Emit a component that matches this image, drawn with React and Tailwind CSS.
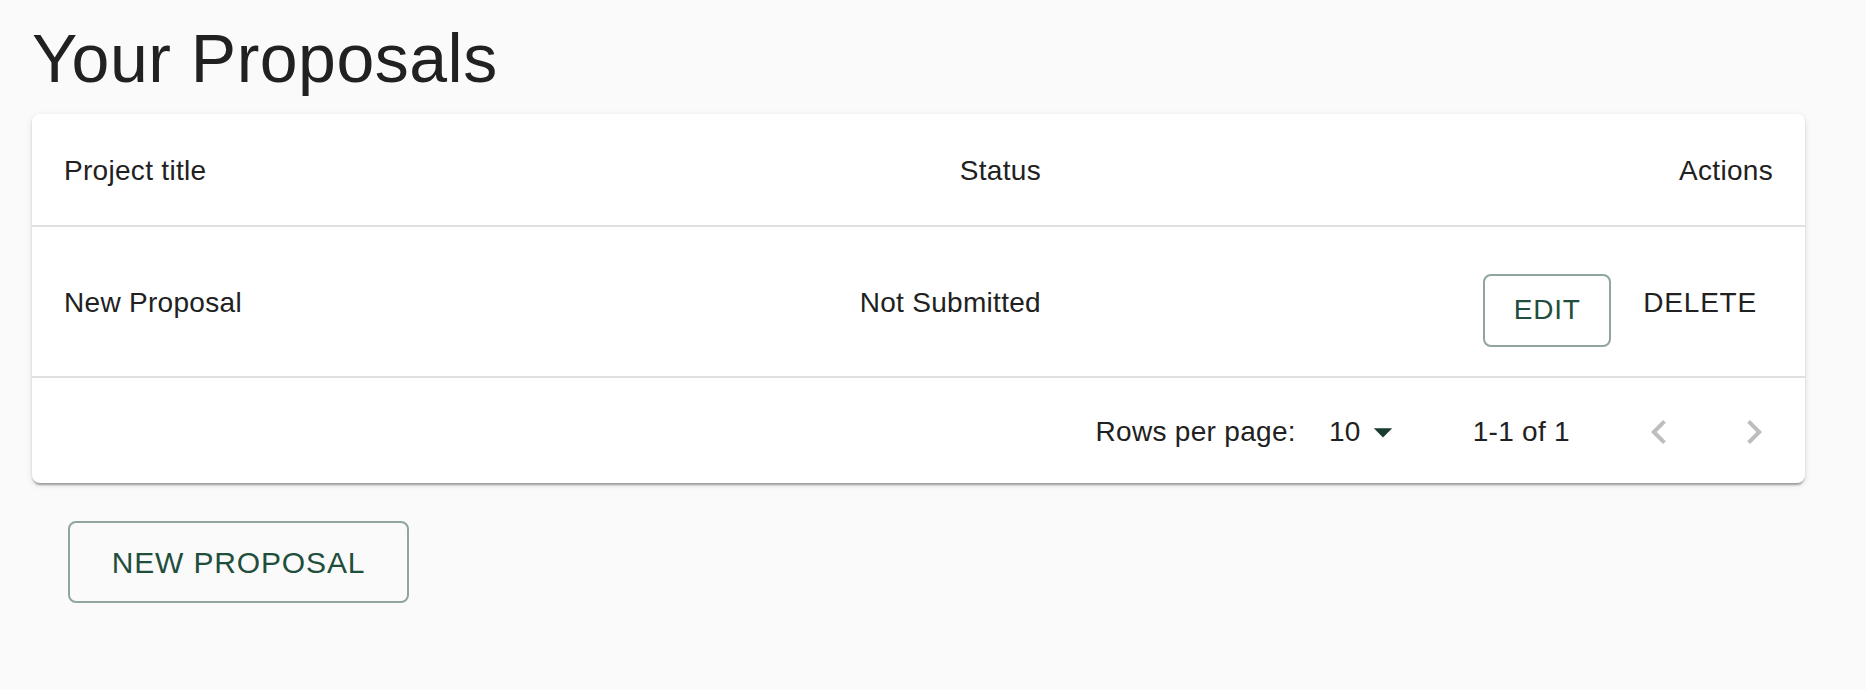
import React from "react";

const ChevronLeft = () => (
  <svg viewBox="0 0 24 24" className="w-12 h-12 fill-[#bdbdbd]">
    <path d="M15.41 16.59 10.83 12l4.58-4.59L14 6l-6 6 6 6z" />
  </svg>
);

const ChevronRight = () => (
  <svg viewBox="0 0 24 24" className="w-12 h-12 fill-[#bdbdbd]">
    <path d="M8.59 16.59 13.17 12 8.59 7.41 10 6l6 6-6 6z" />
  </svg>
);

const App = () => {
  return (
    <div className="min-h-screen w-full bg-[#fafafa] text-[#212121] font-['Liberation_Sans',Arial,sans-serif]">
      <div className="pl-8 pr-[61px] pt-4">
        <h1 className="text-[68px] leading-[84px] tracking-[0.5px] font-normal">
          Your Proposals
        </h1>

        {/* proposals table */}
        <div className="mt-[14px] bg-white rounded-lg overflow-hidden shadow-[0_4px_2px_-2px_rgba(0,0,0,0.2),0_2px_2px_0_rgba(0,0,0,0.14),0_2px_6px_0_rgba(0,0,0,0.12)]">
          <div className="flex items-center h-[113px] pt-[3px] border-b-2 border-[#e0e0e0] text-[28px] tracking-[0.3px]">
            <div className="w-[650px] pl-8">Project title</div>
            <div className="w-[359px] text-right">Status</div>
            <div className="flex-1 text-right pr-8">Actions</div>
          </div>

          <div className="flex items-center h-[151px] pt-[3px] border-b-2 border-[#e0e0e0] text-[28px] tracking-[0.3px]">
            <div className="w-[650px] pl-8">New Proposal</div>
            <div className="w-[359px] text-right">Not Submitted</div>
            <div className="flex-1 flex items-center justify-end pr-8">
              <button className="mt-[14px] w-[128px] h-[73px] flex items-center justify-center border-2 border-[#8fa69e] rounded-lg text-[28px] tracking-[0.8px] text-[#1f4e3d]">
                EDIT
              </button>
              <button className="ml-4 px-4 py-3 text-[28px] tracking-[0.8px] text-[#212121]">
                DELETE
              </button>
            </div>
          </div>

          <div className="flex items-center justify-end h-[105px] pt-[3px] pr-[11px] text-[28px] tracking-[0.3px]">
            <span>Rows per page:</span>
            <div className="ml-[33px] flex items-center">
              <span>10</span>
              <svg viewBox="0 0 24 24" className="w-11 h-11 fill-[#1a3b2e]">
                <path d="M7 10l5 5 5-5z" />
              </svg>
            </div>
            <span className="ml-[68px]">1-1 of 1</span>
            <button className="ml-[49px] p-4">
              <ChevronLeft />
            </button>
            <button className="ml-[15px] p-4">
              <ChevronRight />
            </button>
          </div>
        </div>

        <button className="mt-[38px] ml-9 w-[341px] h-[82px] flex items-center justify-center border-2 border-[#8fa69e] rounded-lg text-[30px] tracking-[0.86px] text-[#1f4e3d]">
          NEW PROPOSAL
        </button>
      </div>
    </div>
  );
};

export default App;
